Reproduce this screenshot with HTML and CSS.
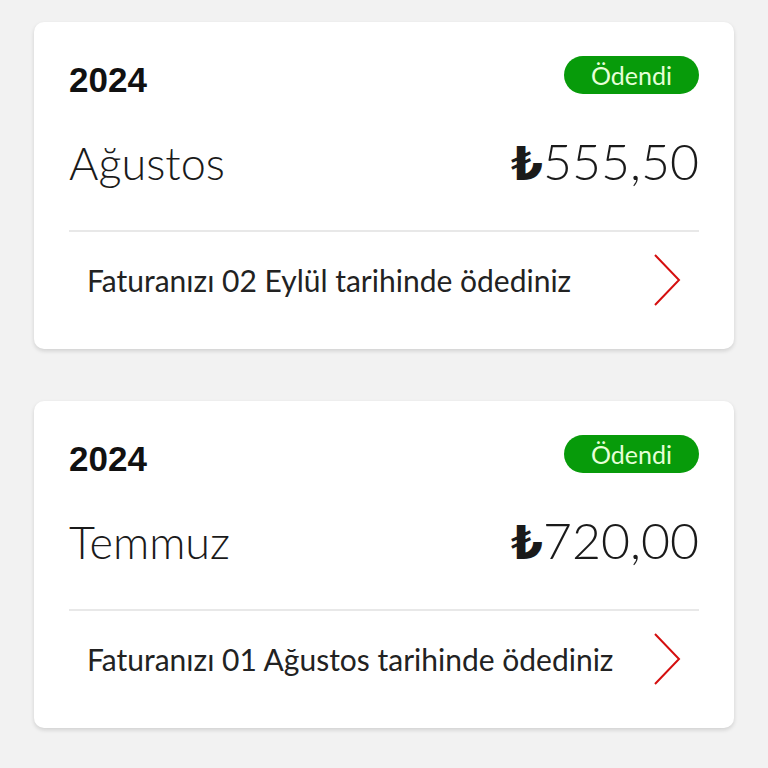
FILE: index.html
```html
<!DOCTYPE html>
<html lang="tr">
<head>
  <meta charset="UTF-8">
  <meta name="viewport" content="width=device-width, initial-scale=1.0">
  <title>Faturalar</title>
  <link rel="stylesheet" href="styles.css">
</head>
<body>
  <div class="list">
    <div class="card">
      <div class="card-head">
        <span class="year">2024</span>
        <span class="badge">Ödendi</span>
      </div>
      <div class="card-main">
        <span class="month">Ağustos</span>
        <span class="amount"><span class="lira">₺</span>555,50</span>
      </div>
      <div class="card-foot">
        <span class="note">Faturanızı 02 Eylül tarihinde ödediniz</span>
        <svg class="chevron" width="28" height="52" viewBox="0 0 28 52">
          <path d="M2 1 L26 26 L2 51" fill="none" stroke="#d50f0f" stroke-width="2"/>
        </svg>
      </div>
    </div>

    <div class="card">
      <div class="card-head">
        <span class="year">2024</span>
        <span class="badge">Ödendi</span>
      </div>
      <div class="card-main">
        <span class="month">Temmuz</span>
        <span class="amount"><span class="lira">₺</span>720,00</span>
      </div>
      <div class="card-foot">
        <span class="note">Faturanızı 01 Ağustos tarihinde ödediniz</span>
        <svg class="chevron" width="28" height="52" viewBox="0 0 28 52">
          <path d="M2 1 L26 26 L2 51" fill="none" stroke="#d50f0f" stroke-width="2"/>
        </svg>
      </div>
    </div>
  </div>
</body>
</html>
```

FILE: styles.css
```css
body {
  margin: 0;
  background: #f2f2f2;
  font-family: Lato, "Noto Sans", sans-serif;
  color: #1a1a1a;
}

.list {
  padding: 22px 34px;
  display: flex;
  flex-direction: column;
  gap: 52px;
}

.card {
  background: #fff;
  border-radius: 10px;
  box-shadow: 0 2px 4px rgba(0, 0, 0, 0.14);
  padding: 34px 35px 0;
}

.card-head {
  display: flex;
  justify-content: space-between;
  align-items: center;
  height: 38px;
}

.year {
  font-family: "Liberation Sans", Arial, sans-serif;
  font-weight: bold;
  font-size: 35px;
  color: #111;
  margin-top: 9px;
}

.badge {
  background: #079b0a;
  color: #e6ffd8;
  border-radius: 19px;
  width: 135px;
  height: 38px;
  line-height: 38px;
  text-align: center;
  font-size: 25px;
}

.card-main {
  display: flex;
  justify-content: space-between;
  align-items: baseline;
  padding-top: 40px;
  padding-bottom: 38px;
  border-bottom: 2px solid #e8e8e8;
  line-height: 55px;
}

.month {
  font-size: 45px;
  font-weight: 300;
}

.amount {
  font-size: 50px;
  font-weight: 300;
}

.lira {
  font-family: "DejaVu Sans", sans-serif;
  font-weight: bold;
  font-size: 46px;
}

.card-foot {
  display: flex;
  justify-content: space-between;
  align-items: center;
  padding: 22px 18px 43px;
}

.note {
  font-size: 30px;
  color: #222;
}

.chevron {
  display: block;
}
```
